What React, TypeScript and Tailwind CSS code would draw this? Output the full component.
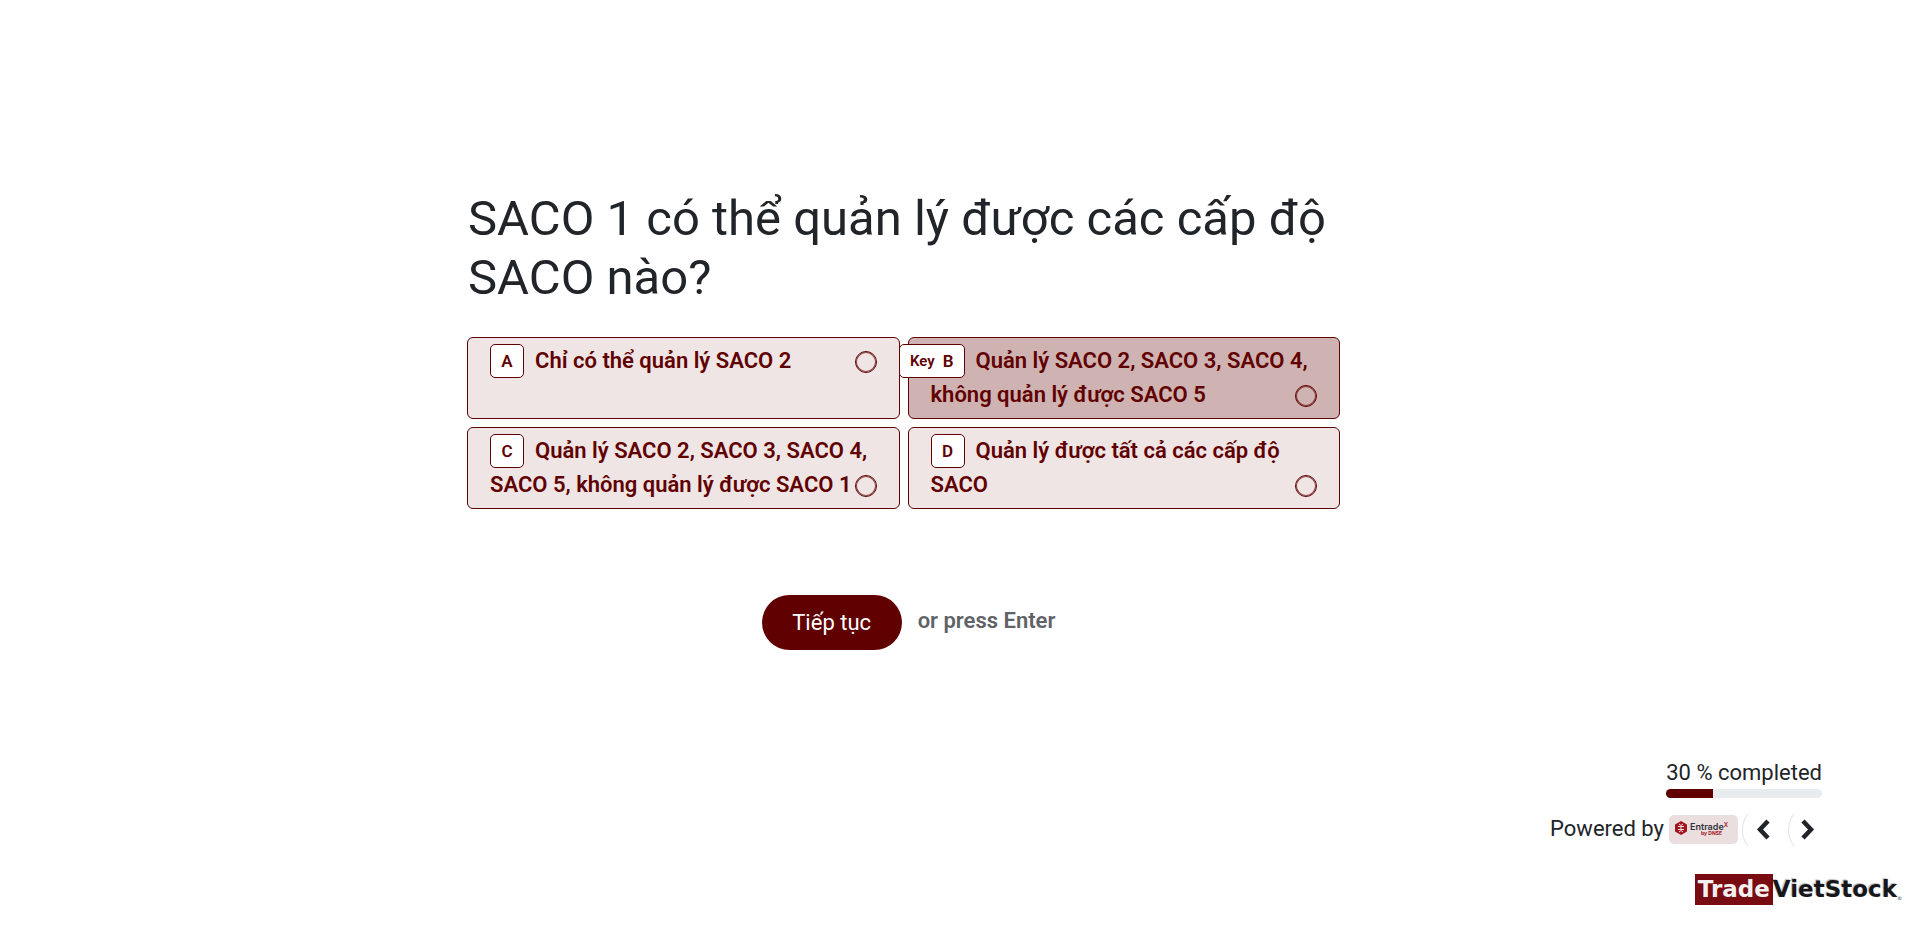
import { useState } from "react";
import clsx from "clsx";

type Answer = { key: string; text: string };

const ANSWERS: Answer[] = [
  { key: "A", text: "Chỉ có thể quản lý SACO 2" },
  { key: "B", text: "Quản lý SACO 2, SACO 3, SACO 4, không quản lý được SACO 5" },
  { key: "C", text: "Quản lý SACO 2, SACO 3, SACO 4, SACO 5, không quản lý được SACO 1" },
  { key: "D", text: "Quản lý được tất cả các cấp độ SACO" },
];

const PROGRESS = 30;

export default function App() {
  const [active, setActive] = useState("B");

  return (
    <div className="flex min-h-screen flex-col bg-white font-[Roboto,sans-serif] text-[22px] text-[#212529]">
      <main className="pt-[189px] pl-5 pr-[133px]">
        <form className="mx-auto max-w-[873px]" onSubmit={(e) => e.preventDefault()}>
          <h1 id="question" className="pl-px text-[49px] leading-[59px]">SACO 1 có thể quản lý được các cấp độ SACO nào?</h1>

          <div role="radiogroup" aria-labelledby="question" className="mt-[30px] grid grid-cols-2 gap-2">
            {ANSWERS.map((answer) => (
              <AnswerCard key={answer.key} answer={answer} active={active === answer.key} onHover={() => setActive(answer.key)} />
            ))}
          </div>

          <div className="mt-[86px] flex items-center justify-center gap-4 pl-[10px]">
            <button type="submit" className="h-[55px] w-[140px] rounded-full bg-[#600000] text-white">Tiếp tục</button>
            <span className="pb-1 font-semibold text-[#5f6368]">or press Enter</span>
          </div>
        </form>
      </main>

      <footer className="mt-auto pb-[22px]">
        <div className="flex flex-col items-end pr-[98px]">
          <div>
            <p id="progress" className="leading-8">{PROGRESS} % completed</p>
            <div role="progressbar" aria-labelledby="progress" aria-valuenow={PROGRESS} className="h-[9px] overflow-hidden rounded-full bg-[#e9ecef]">
              <div className="h-full bg-[#600000]" style={{ width: `${PROGRESS}%` }} />
            </div>
          </div>
          <div className="mt-[14px] flex items-center">
            <span className="mr-[5px] pb-[2px]">Powered by</span>
            <EntradeBadge />
            <div className="ml-1 flex gap-3">
              <button type="button" aria-label="Previous"><Arrow d="M26 8 18 16.5l8 8.5" /></button>
              <button type="button" aria-label="Next"><Arrow d="M15 8l8 8.5-8 8.5" /></button>
            </div>
          </div>
        </div>
        <TradeLogo />
      </footer>
    </div>
  );
}

function AnswerCard({ answer, active, onHover }: { answer: Answer; active: boolean; onHover: () => void }) {
  return (
    <label onMouseEnter={onHover}
      className={clsx("block cursor-pointer rounded-md border border-[#600000] px-[22px] py-[6px] font-semibold leading-[34px] text-[#600000]",
        active ? "bg-[#cfb2b2]" : "bg-[#efe5e5]")}>
      <span className="relative float-left mr-[11px] size-[34px] text-[17px]">
        <span className="absolute right-0 top-0 flex h-[34px] min-w-[34px] items-center justify-center gap-2 rounded-[5px] border border-[#600000] bg-white px-[10px]">
          {active && <span className="text-[15px]">Key</span>}
          {answer.key}
        </span>
      </span>
      {answer.text}
      <input type="radio" name="answer" value={answer.key}
        className="float-right mt-[7px] size-[22px] appearance-none rounded-full border border-[#600000] shadow-[inset_0_0_0_1px_#600000b3] checked:bg-[#600000]" />
    </label>
  );
}

function Arrow({ d }: { d: string }) {
  return (
    <svg className="h-[34px] w-[34px]" viewBox="0 0 34 34" fill="none">
      <path d="M6.5 0.5C-1.5 9-1.5 25 6.5 33.5" stroke="#dee2e6" />
      <path d={d} stroke="#212529" strokeWidth={4.500} />
    </svg>
  );
}

function EntradeBadge() {
  return (
    <div className="flex h-[29px] w-[69px] items-center gap-[3px] rounded-[5px] bg-[#eadede] pb-1 pl-[6px]">
      <svg className="h-[14px] w-3 shrink-0" viewBox="0 0 12 14" fill="none">
        <path d="M6 0l6 3.5v7L6 14l-6-3.5v-7z" fill="#a3151f" />
        <path d="M3 5.5h6M3 8.5h6M6 5v4M4 3l2 1.500 2-1.500M4 11l2-1.500 2 1.500" stroke="#eadede" />
      </svg>
      <div className="pt-[3px] font-[Inter,sans-serif] font-semibold">
        <p className="flex text-[9px] leading-[9px] text-[#33333d]">Entrade<sup className="top-0 text-[6px] leading-[6px] text-[#a3151f]">X</sup></p>
        <p className="pr-[6px] text-right text-[5px] leading-[5px] font-bold text-[#a3151f]">by DNSE</p>
      </div>
    </div>
  );
}

function TradeLogo() {
  return (
    <div className="mt-[27px] flex items-center justify-end pr-[18px] font-['DejaVu_Sans',sans-serif] text-[23px] font-bold leading-[31px]">
      <span className="bg-[#780c12] px-[3px] text-[#f4f0f0]">Trade</span>
      <span className="text-[#17171a] text-shadow-[-1px_-1px_1px_#00000040]">VietStock</span>
      <span className="self-end text-[5px] leading-[14px] text-gray-500">®</span>
    </div>
  );
}
